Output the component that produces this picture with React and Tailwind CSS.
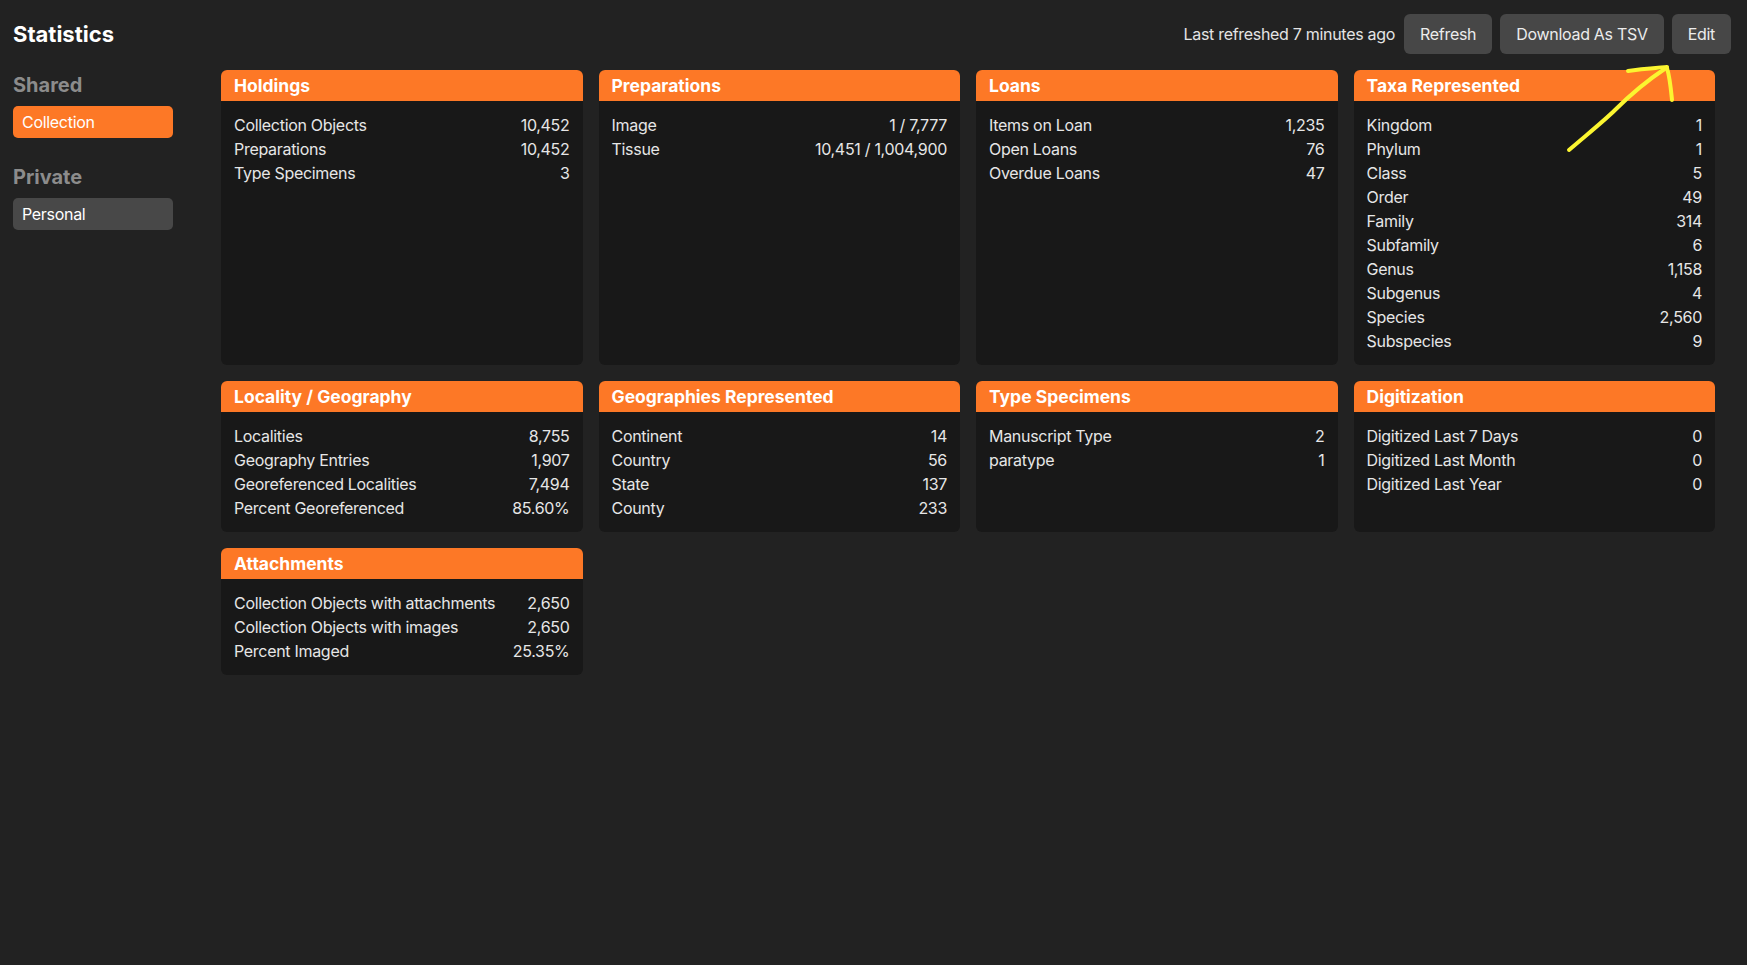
import React from "react";

const cards = [
  { title: "Holdings", rows: [["Collection Objects", "10,452"], ["Preparations", "10,452"], ["Type Specimens", "3"]] },
  { title: "Preparations", rows: [["Image", "1 / 7,777"], ["Tissue", "10,451 / 1,004,900"]] },
  { title: "Loans", rows: [["Items on Loan", "1,235"], ["Open Loans", "76"], ["Overdue Loans", "47"]] },
  {
    title: "Taxa Represented",
    rows: [
      ["Kingdom", "1"], ["Phylum", "1"], ["Class", "5"], ["Order", "49"], ["Family", "314"],
      ["Subfamily", "6"], ["Genus", "1,158"], ["Subgenus", "4"], ["Species", "2,560"], ["Subspecies", "9"],
    ],
  },
  { title: "Locality / Geography", rows: [["Localities", "8,755"], ["Geography Entries", "1,907"], ["Georeferenced Localities", "7,494"], ["Percent Georeferenced", "85.60%"]] },
  { title: "Geographies Represented", rows: [["Continent", "14"], ["Country", "56"], ["State", "137"], ["County", "233"]] },
  { title: "Type Specimens", rows: [["Manuscript Type", "2"], ["paratype", "1"]] },
  { title: "Digitization", rows: [["Digitized Last 7 Days", "0"], ["Digitized Last Month", "0"], ["Digitized Last Year", "0"]] },
  { title: "Attachments", rows: [["Collection Objects with attachments", "2,650"], ["Collection Objects with images", "2,650"], ["Percent Imaged", "25.35%"]] },
];

function Card({ title, rows }) {
  return (
    <div className="flex flex-col rounded-[6px] overflow-hidden bg-[#181818]">
      <div className="h-[31px] flex items-center px-[13px] bg-[#fd7826] text-white font-bold text-[17.5px] leading-none">
        {title}
      </div>
      <div className="flex flex-col px-[13px] pt-[12px] pb-[12px]">
        {rows.map(([k, v]) => (
          <div key={k} className="flex justify-between items-center h-[24px] text-[16px] tracking-[-0.3px] text-[#e6e6e6]">
            <span>{k}</span>
            <span>{v}</span>
          </div>
        ))}
      </div>
    </div>
  );
}

export default function App() {
  return (
    <div
      className="relative min-h-screen w-full bg-[#222222] text-white"
      style={{ fontFamily: "Inter, 'Noto Sans', sans-serif" }}
    >
      <div className="flex items-center justify-between pl-[13px] pr-[16px] pt-[14px] h-[54px]">
        <h1 className="text-[22px] font-bold text-white">Statistics</h1>
        <div className="flex items-center gap-2 tracking-[-0.3px]">
          <span className="text-[16px] text-[#e4e4e4] mr-[1px]">Last refreshed 7 minutes ago</span>
          <button className="h-[40px] px-4 rounded-[6px] bg-[#474747] text-[16px] text-[#ececec]">Refresh</button>
          <button className="h-[40px] px-4 rounded-[6px] bg-[#474747] text-[16px] text-[#ececec]">Download As TSV</button>
          <button className="h-[40px] px-4 rounded-[6px] bg-[#474747] text-[16px] text-[#ececec]">Edit</button>
        </div>
      </div>
      <div className="flex pl-[13px] pr-[32px] pt-[16px] gap-[48px]">
        <aside className="w-[160px] shrink-0 flex flex-col">
          <div className="h-[28px] flex items-center text-[20px] font-bold text-[#8c8c8c] translate-y-[1px]">Shared</div>
          <button className="mt-2 h-[32px] w-full text-left px-[9px] rounded-[5px] bg-[#fd7826] text-[16px] tracking-[-0.3px] text-white">Collection</button>
          <div className="mt-6 h-[28px] flex items-center text-[20px] font-bold text-[#8c8c8c] translate-y-[1px]">Private</div>
          <button className="mt-2 h-[32px] w-full text-left px-[9px] rounded-[5px] bg-[#484848] text-[16px] tracking-[-0.3px] text-white">Personal</button>
        </aside>
        <main className="flex-1 grid grid-cols-4 gap-4 content-start">
          {cards.map((c) => (
            <Card key={c.title} {...c} />
          ))}
        </main>
      </div>
      <svg className="absolute left-0 top-0 pointer-events-none" width="1747" height="200" viewBox="0 0 1747 200">
        <g fill="none" stroke="#fbf530" strokeWidth="4" strokeLinecap="round" strokeLinejoin="round">
          <path d="M1569 150 C 1590 132, 1605 120, 1615 110 C 1630 95, 1648 80, 1666 68" />
          <path d="M1628 71 C 1640 69, 1655 68, 1667 67" />
          <path d="M1667 68 C 1670 78, 1671 90, 1672 100" />
        </g>
      </svg>
    </div>
  );
}
